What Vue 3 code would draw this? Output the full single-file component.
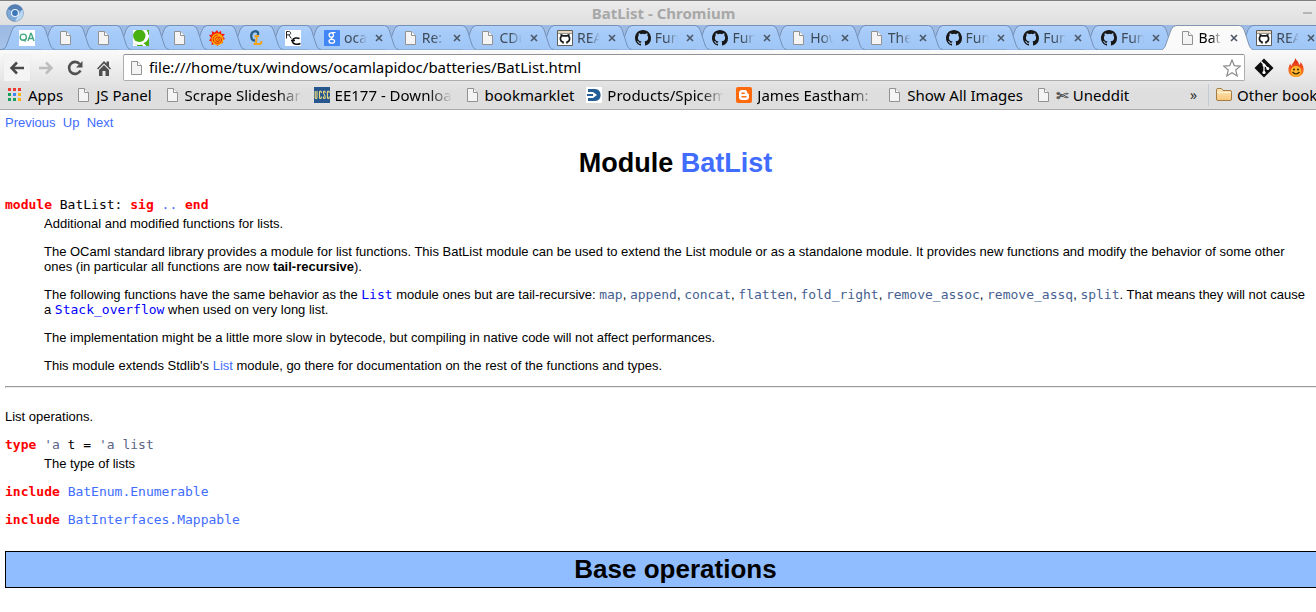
<script setup>
const pinned = ['qa', 'page', 'page', 'bubble', 'page', 'sun', 'cl', 'rc']
const tabs = [
  { icon: 'google', title: 'ocaml' },
  { icon: 'page', title: 'Re: ' },
  { icon: 'page', title: 'CDuce' },
  { icon: 'readme', title: 'README' },
  { icon: 'github', title: 'Functors' },
  { icon: 'github', title: 'Functors' },
  { icon: 'page', title: 'How' },
  { icon: 'page', title: 'The' },
  { icon: 'github', title: 'Functors' },
  { icon: 'github', title: 'Functors' },
  { icon: 'github', title: 'Functors' },
  { icon: 'page', title: 'BatList', active: true },
  { icon: 'readme', title: 'README' },
]
const allTabs = [
  ...pinned.map((icon) => ({ icon, title: '', pinned: true })),
  ...tabs,
]
const bookmarks = [
  { icon: 'apps', title: 'Apps' },
  { icon: 'page', title: 'JS Panel' },
  { icon: 'page', title: 'Scrape Slideshare', long: true },
  { icon: 'ucsc', title: 'EE177 - Downloads', long: true },
  { icon: 'page', title: 'bookmarklet' },
  { icon: 'spice', title: 'Products/Spicemas', long: true },
  { icon: 'blogger', title: 'James Eastham: Pro', long: true },
  { icon: 'page', title: 'Show All Images' },
  { icon: 'page', title: '✄ Uneddit' },
]
const functions = ['map', 'append', 'concat', 'flatten', 'fold_right', 'remove_assoc', 'remove_assq', 'split']
</script>

<template>
  <div class="window">
    <svg class="sprites" aria-hidden="true">
      <defs>
        <linearGradient id="tabfill" x1="0" y1="0" x2="0" y2="1">
          <stop offset="0" stop-color="#b2d2fb" /><stop offset=".3" stop-color="#a6cbf9" /><stop offset="1" stop-color="#9fc6f6" />
        </linearGradient>
        <linearGradient id="folder" x1="0" y1="0" x2="0" y2="1">
          <stop offset="0" stop-color="#ffe9b8" /><stop offset="1" stop-color="#f7c67c" />
        </linearGradient>
        <linearGradient id="flame" x1="0" y1="0" x2="0" y2="1">
          <stop offset="0" stop-color="#d9230f" /><stop offset=".5" stop-color="#f4511e" /><stop offset="1" stop-color="#ff9a1a" />
        </linearGradient>
      </defs>
      <symbol id="page" viewBox="0 0 16 16">
        <path d="M3.500 1.500h6l4 4v9h-10z" fill="#f4f4f4" stroke="#929292" />
        <path d="M9.500 1.500v4h4" fill="#fff" stroke="#929292" />
      </symbol>
      <symbol id="qa" viewBox="0 0 16 16">
        <path d="M0 0h16v16H0z" fill="#fff" />
        <circle cx="4.300" cy="7.200" r="3.100" fill="none" stroke="#43a883" stroke-width="1.400" />
        <path d="M4.500 9.500l2.200 2M9 11l2.700-7.500h.6L15 11M10 8.500h4" fill="none" stroke="#43a883" stroke-width="1.400" />
      </symbol>
      <symbol id="bubble" viewBox="0 0 16 16">
        <path d="M0 0h16v16H0z" fill="#fff" />
        <circle cx="6.300" cy="5.800" r="6.200" fill="#48b010" />
        <path d="M13.500 0H16v5l-.7-.2Q15.200 2 13.500 0zM16 7v9h-2.500L10.500 13Q14.500 12 16 7zM0 13Q3 16 9 14.500L10 16H0z" fill="#48b010" />
        <path d="M0 13Q2 14.500 4 14.700V16H0z" fill="#fff" />
      </symbol>
      <symbol id="sun" viewBox="0 0 16 16">
        <path d="M8 0l1.500 2.500L12 .8l.3 3L16 4l-2 2.600 2 2.400-2.600 1.300.6 3-3-.2L8.500 16 6 13.800 2.500 15l.3-3.200L0 10.500l2-2.700L0 5l3-.6L2.800 1l3 1.500z" fill="#f41c0a" />
        <circle cx="8.400" cy="9.300" r="6" fill="#ffa800" />
        <path d="M8.500 9.500c0-1.400 2-1 2 .4 0 2.300-4 2.200-4-.5 0-3.400 6-3.200 6 .5 0 4.500-7.700 4.600-8.300 0C3.800 7.500 6 5 8.500 5" fill="none" stroke="#e01c0a" stroke-width="1" />
      </symbol>
      <symbol id="cl" viewBox="0 0 16 16">
        <path d="M11 5.500V2.300C10 1.500 8.500 1 7 1.500 2.800 3 3.500 10.500 8 10.500" fill="none" stroke="#275e88" stroke-width="2.300" />
        <path d="M7.500 6h4.500M9.800 6l-1 8M6.500 14h6q2 0 2-3" fill="none" stroke="#f2a31b" stroke-width="2" />
      </symbol>
      <symbol id="rc" viewBox="0 0 16 16">
        <path d="M0 0h16v16H0z" fill="#fff" />
        <path d="M1.500 8.500v-7h2.300c2.500 0 2.500 3.300 0 3.300H1.500M3.800 4.800l2.500 3.700" fill="none" stroke="#222" />
        <path d="M14.500 8.500C12.500 7.500 8 7.500 7.500 10.500 7 14.500 12 15 15.500 13.500M6 10.500h4" fill="none" stroke="#111" stroke-width="1.500" />
      </symbol>
      <symbol id="google" viewBox="0 0 16 16">
        <rect width="16" height="16" rx="1" fill="#4285f4" />
        <circle cx="7.300" cy="5" r="2.200" fill="none" stroke="#fff" stroke-width="1.300" />
        <path d="M7.500 2.500h4M9 7c-3 .7-2 1.700-.5 2.200" fill="none" stroke="#fff" stroke-width="1.200" />
        <ellipse cx="7.800" cy="11.300" rx="2.800" ry="1.900" fill="none" stroke="#fff" stroke-width="1.300" />
      </symbol>
      <symbol id="github" viewBox="0 0 16 16">
        <path d="M8 0C3.580 0 0 3.580 0 8c0 3.540 2.290 6.530 5.470 7.590.4.070.55-.17.55-.38 0-.19-.01-.82-.01-1.490-2.010.37-2.530-.49-2.690-.94-.09-.23-.48-.94-.82-1.130-.28-.15-.68-.52-.01-.53.63-.01 1.080.58 1.230.82.72 1.210 1.870.87 2.330.66.07-.52.28-.87.51-1.070-1.780-.2-3.640-.89-3.640-3.950 0-.87.31-1.590.82-2.150-.08-.2-.36-1.020.08-2.120 0 0 .67-.21 2.200.82a7.600 7.600 0 0 1 4 0c1.530-1.040 2.200-.82 2.200-.82.44 1.100.16 1.920.08 2.120.51.56.82 1.270.82 2.150 0 3.070-1.870 3.750-3.650 3.950.29.25.54.73.54 1.480 0 1.070-.01 1.930-.01 2.200 0 .21.15.46.55.38A8 8 0 0 0 16 8c0-4.420-3.580-8-8-8z" fill="#171717" />
      </symbol>
      <symbol id="readme" viewBox="0 0 16 16">
        <path d="M.5.500h15v15H.5z" fill="#fff" stroke="#5d5d5d" />
        <path d="M1 1h14v2H1z" fill="#e8d8c0" /><path d="M1 3.500h14" stroke="#999" />
        <path d="M6 13.500v-1.300C3 11.500 2.800 7.500 4.300 6.500V5l2 .8h3.400l2-.8v1.500c1.500 1 1.300 5-1.700 5.700v1.300" fill="none" stroke="#171717" stroke-width="1.700" />
      </symbol>
      <symbol id="apps" viewBox="0 0 16 16">
        <path d="M1 1h3v3H1zM6 1h3v3H6zM11 1h3v3h-3z" fill="#ee3b30" />
        <path d="M1 6h3v3H1z" fill="#16a05d" /><path d="M6 6h3v3H6z" fill="#3b87f5" /><path d="M11 6h3v3h-3z" fill="#f9b613" />
        <path d="M1 11h3v3H1zM6 11h3v3H6z" fill="#16a05d" /><path d="M11 11h3v3h-3z" fill="#f9b613" />
      </symbol>
      <symbol id="ucsc" viewBox="0 0 16 16">
        <path d="M0 0h16v16H0z" fill="#27568f" />
        <path d="M1.200 4v6.500q0 1 .9 1t.9-1V4M7.300 6V5q0-1-.9-1t-.9 1v5.500q0 1 .9 1t.9-1v-1M11.200 6V5q0-1-.9-1t-.9 1c0 3 1.800 2 1.800 5.500q0 1-.9 1t-.9-1v-1M15.200 6V5q0-1-.9-1t-.9 1v5.500q0 1 .9 1t.9-1v-1" fill="none" stroke="#f0dc7c" stroke-width="1.100" />
      </symbol>
      <symbol id="spice" viewBox="0 0 16 16">
        <path d="M0 0h16v16H0z" fill="#fff" />
        <path d="M2 2h7c7.500 0 7.500 12 0 12H2v-3h5V9H1V7h6V5H2z" fill="#235f96" />
        <path d="M7 5l4 3-4 3z" fill="#fff" />
      </symbol>
      <symbol id="blogger" viewBox="0 0 16 16">
        <rect width="16" height="16" rx="2" fill="#ff6a0c" />
        <path d="M6 3h2.500C11 3 11.300 5 11.300 6c0 1 1.700.2 1.700 1.500V10c0 2-1.300 3-3 3H6c-2 0-3-1.300-3-3V6c0-2 1.300-3 3-3z" fill="#fff" />
        <path d="M6 6.200h2.200M6 9.800h4" stroke="#ff6a0c" stroke-width="1.400" stroke-linecap="round" />
      </symbol>
    </svg>

    <header class="titlebar">
      <svg class="chromium" viewBox="0 0 18 18" aria-hidden="true">
        <circle cx="9" cy="9" r="8.300" fill="#7fa9d8" stroke="#587da8" stroke-width=".8" />
        <path d="M9 9L1.800 5A8.300 8.300 0 0 1 16.500 5.500z" fill="#537fb4" />
        <path d="M9 17.300l3.500-6.500L16.500 5.500A8.300 8.300 0 0 1 9 17.300z" fill="#b9d6f2" />
        <circle cx="9" cy="9" r="4" fill="#eef5fc" /><circle cx="9" cy="9" r="2.900" fill="#3e76ba" />
      </svg>
      <span class="caption">BatList - Chromium</span>
      <button class="minimize" aria-label="Minimize"></button>
    </header>

    <nav class="tabstrip" aria-label="Tabs">
      <div
        v-for="(tab, i) in allTabs"
        :key="i"
        class="tab"
        :class="{ pinned: tab.pinned, active: tab.active }"
        :style="{ zIndex: tab.active ? 40 : 30 - i }"
      >
        <svg v-if="tab.pinned" class="shape" viewBox="0 0 53 25" preserveAspectRatio="none" aria-hidden="true">
          <path d="M0 24.500C3 24 4 22 5 19L10 5Q11.500 1 15 .5H39Q42 1 43.500 5L48 19C49 22 50 24 53 24.500" />
        </svg>
        <svg v-else class="shape" viewBox="0 0 93 25" preserveAspectRatio="none" aria-hidden="true">
          <path v-if="tab.active" d="M0 25C3 24 4 22 5 19L10 5Q11.500 1 15 .5H79Q82 1 83.500 5L88 19C89 22 90 24 93 25" />
          <path v-else d="M0 24.500C3 24 4 22 5 19L10 5Q11.500 1 15 .5H79Q82 1 83.500 5L88 19C89 22 90 24 93 24.500" />
        </svg>
        <svg class="icon" aria-hidden="true"><use :href="'#' + tab.icon" /></svg>
        <template v-if="!tab.pinned">
          <span class="tab-title">{{ tab.title }}</span>
          <button class="close" aria-label="Close tab">
            <svg viewBox="0 0 8 8" aria-hidden="true"><path d="M1 1l6 6M7 1L1 7" /></svg>
          </button>
        </template>
      </div>
    </nav>

    <div class="chrome">
      <div class="toolbar">
        <button class="tool framed" aria-label="Back">
          <svg viewBox="0 0 16 16"><path d="M15 8H3M8 2.500L2.500 8 8 13.500" fill="none" stroke="#4a4a4a" stroke-width="2.500" /></svg>
        </button>
        <button class="tool" aria-label="Forward">
          <svg viewBox="0 0 16 16"><path d="M1 8h12M8 2.500L13.500 8 8 13.500" fill="none" stroke="#bdbdbd" stroke-width="2.500" /></svg>
        </button>
        <button class="tool" aria-label="Reload">
          <svg viewBox="0 0 16 16"><path d="M12.700 4A6 6 0 1 0 13.500 10.500" fill="none" stroke="#505050" stroke-width="2.600" /><path d="M15.500 1v6.500H9z" fill="#505050" /></svg>
        </button>
        <button class="tool" aria-label="Home">
          <svg viewBox="0 0 16 16"><path d="M8 1L1 8.500l1 1L8 3.500l6 6 1-1-2-2V1.500h-2.500v2z" fill="#505050" /><path d="M8 5l5 5v6H9.500v-5h-3v5H3v-6z" fill="#505050" /></svg>
        </button>
        <label class="address">
          <svg class="icon" aria-hidden="true"><use href="#page" /></svg>
          <input type="text" aria-label="Address" value="file:///home/tux/windows/ocamlapidoc/batteries/BatList.html" />
          <svg class="star" viewBox="0 0 18 18" aria-hidden="true"><path d="M9 1l2.300 5.600 6 .5-4.600 3.900 1.500 5.900L9 13.700l-5.200 3.200 1.500-5.900L.7 7.100l6-.5z" /></svg>
        </label>
        <button class="extension" aria-label="Git">
          <svg viewBox="0 0 20 20"><path d="M10 .5l9.500 9.500-9.500 9.500L.5 10z" fill="#0c0c0c" /><path d="M7 3.500l3 3V15M10.500 7l3.500 3.500" fill="none" stroke="#fff" stroke-width="1.300" /><circle cx="10" cy="14.500" r="1.600" fill="#fff" /><circle cx="10" cy="7" r="1.500" fill="#fff" /><circle cx="13.800" cy="10.500" r="1.500" fill="#fff" /></svg>
        </button>
        <button class="extension" aria-label="Flame">
          <svg viewBox="0 0 20 20"><path d="M9 0c1 2 4 3.500 4 7 1-.5 1.500-1.500 1.500-3C17 7 18 9.500 17.500 13c-.5 4-4 6-7.500 6s-7-2-7.500-6C2.200 10 3 7.500 4.500 5.500c0 1.500.3 2 1 2.500C6 5 9.500 3.500 9 0z" fill="url(#flame)" /><circle cx="10" cy="13" r="5.200" fill="#ffb52c" /><circle cx="8" cy="11.500" r="1" fill="#402000" /><circle cx="12" cy="11.500" r="1" fill="#402000" /><path d="M6.500 14q3.500 4 7 0" fill="none" stroke="#402000" stroke-width="1.200" /></svg>
        </button>
      </div>

      <nav class="bookmarks" aria-label="Bookmarks">
        <a v-for="mark in bookmarks" :key="mark.title" href="#" class="bookmark">
          <svg class="icon" aria-hidden="true"><use :href="'#' + mark.icon" /></svg>
          <span class="label" :class="{ long: mark.long }">{{ mark.title }}</span>
        </a>
        <div class="overflow">
          <button class="more" aria-label="More bookmarks">»</button>
          <a href="#" class="bookmark other">
            <svg class="icon" viewBox="0 0 16 16" aria-hidden="true"><path d="M.5 12V3q0-1.500 1.500-1.500h3.500L7 3.500h7q1.500 0 1.500 1.500v7q0 1.500-1.500 1.500H2Q.5 13.500.5 12z" fill="url(#folder)" stroke="#a67c45" /><path d="M1 5.500h14" stroke="#fff3d6" /></svg>
            <span class="label">Other bookmarks</span>
          </a>
        </div>
      </nav>
    </div>

    <main class="document">
      <nav class="pager"><a href="#">Previous</a>&nbsp; <a href="#">Up</a>&nbsp; <a href="#">Next</a></nav>
      <h1>Module <a href="#">BatList</a></h1>
      <div class="signature"><b>module</b> BatList: <b>sig</b> <a href="#">..</a> <b>end</b></div>
      <section class="info">
        <p>Additional and modified functions for lists.</p>
        <p>The OCaml standard library provides a module for list functions. This BatList module can be used to extend the List module or as a standalone module. It provides new functions and modify the behavior of some other ones (in particular all functions are now <strong>tail-recursive</strong>).</p>
        <p>The following functions have the same behavior as the <code class="constructor">List</code> module ones but are tail-recursive: <template v-for="(name, i) in functions" :key="name"><code>{{ name }}</code>{{ i < functions.length - 1 ? ', ' : '. ' }}</template>That means they will not cause a <code class="constructor">Stack_overflow</code> when used on very long list.</p>
        <p>The implementation might be a little more slow in bytecode, but compiling in native code will not affect performances.</p>
        <p>This module extends Stdlib's <a href="#">List</a> module, go there for documentation on the rest of the functions and types.</p>
      </section>
      <hr />
      <p class="intro">List operations.</p>
      <div class="signature"><b>type</b> <i>'a</i> t = <i>'a list</i></div>
      <section class="info"><p>The type of lists</p></section>
      <div class="signature include"><b>include</b> <a href="#">BatEnum.Enumerable</a></div>
      <div class="signature include"><b>include</b> <a href="#">BatInterfaces.Mappable</a></div>
      <h2>Base operations</h2>
    </main>
  </div>
</template>

<style>
html, body { background: #fff; }
</style>

<style scoped>
.window { overflow: hidden; font-family: "Noto Sans", "Open Sans", sans-serif; color: #000; }
.sprites { position: absolute; width: 0; height: 0; }
button { border: 0; padding: 0; margin: 0; background: none; font: inherit; }
svg { display: block; flex: none; }
.icon { width: 16px; height: 16px; }
.titlebar { display: flex; align-items: center; height: 25px; box-sizing: border-box; border-top: 1px solid #7f7f7f; background: linear-gradient(#ebebeb, #dfdfdf); padding: 0 4px 0 6px; }
.chromium { width: 18px; height: 18px; }
.caption { flex: 1; text-align: center; font-size: 15px; line-height: 20px; font-weight: 700; color: #a8a8a8; }
.minimize { width: 9px; height: 2px; background: #b5b5b5; }
.tabstrip { display: flex; height: 25px; padding-left: 2px; background: linear-gradient(#9bb9e2, #a5c3ea); box-shadow: inset 0 -1px #7791b3; isolation: isolate; }
.tab { position: relative; flex: 1 1 0; min-width: 0; display: flex; align-items: center; box-sizing: border-box; height: 25px; padding-left: 18px; }
.tab.pinned { flex: 0 0 38px; padding-left: 17px; }
.shape { position: absolute; left: 0; top: 0; width: calc(100% + 15px); height: 25px; fill: url(#tabfill); stroke: #7390b8; stroke-width: 1; }
.active .shape { fill: #fafafa; stroke: #8195b0; }
.tab .icon { position: relative; }
.tab-title { position: relative; width: 23px; margin-left: 4px; overflow: hidden; white-space: nowrap; font-size: 14px; line-height: 20px; color: #3f4a58; mask-image: linear-gradient(90deg, #000 50%, transparent); }
.active .tab-title { color: #000; }
.close { position: relative; flex: none; margin-left: 8px; }
.close svg { width: 8px; height: 8px; stroke: #4b5766; stroke-width: 1.6; }
.chrome { background: linear-gradient(#fafafa, #dedede 70%); border-bottom: 1px solid #a9a9a9; }
.toolbar { display: flex; align-items: center; height: 33px; padding: 2px 10px 0 4px; box-sizing: border-box; }
.tool { display: flex; align-items: center; justify-content: center; width: 26px; height: 26px; margin-right: 3px; }
.tool.framed { background: #f4f4f4; box-shadow: 0 0 1px #ddd; }
.tool svg { width: 16px; height: 16px; }
.address { flex: 1; display: flex; align-items: center; height: 27px; box-sizing: border-box; margin-left: 3px; margin-right: 9px; padding: 0 3px 0 4px; border: 1px solid #adadad; border-top-color: #929292; border-radius: 2px; background: #fff; }
.address input { flex: 1; min-width: 0; height: 21px; border: 0; outline: 0; padding: 0 0 1px; box-sizing: border-box; margin-left: 5px; background: none; font: 15px/20px "Noto Sans", "Open Sans", sans-serif; color: #000; }
.star { width: 18px; height: 18px; fill: #fff; stroke: #8b8b8b; stroke-width: 1.2; }
.extension { margin-right: 12px; }
.extension:last-child { margin-right: 0; }
.extension svg { width: 20px; height: 20px; }
.bookmarks { display: flex; align-items: center; gap: 12px; height: 26px; box-sizing: border-box; padding: 0 0 2px 7px; }
.bookmark { display: flex; align-items: center; gap: 5px; flex: none; color: #000; text-decoration: none; }
.label { font-size: 15px; line-height: 22px; white-space: nowrap; }
.label.long { width: 117px; overflow: hidden; mask-image: linear-gradient(90deg, #000 80%, transparent); }
.overflow { display: flex; align-items: center; margin-left: auto; width: 126px; flex: none; }
.more { flex: none; width: 18px; font-size: 14px; line-height: 20px; text-align: left; color: #333; }
.other { border-left: 1px solid #c3ccd6; padding-left: 7px; }
.document { width: calc(100% + 35px); box-sizing: border-box; padding: 5px 5px 24px; font: 13px/15px "Liberation Sans", Arial, sans-serif; }
.document a { color: #416dff; text-decoration: none; }
.document p { margin: 0; }
h1 { margin: 18px 0 19px; font-size: 27px; line-height: 30px; text-align: center; }
.signature, code { font-family: "DejaVu Sans Mono", monospace; }
code { font-size: 13px; line-height: 1; color: #465f91; }
code.constructor { color: #00f; }
.signature b { color: #f00; }
.signature i { font-style: normal; color: #5c6585; }
.info { margin: 4px 39px 13px; }
.document .info p + p { margin-top: 13px; }
hr { margin: 0; border: 1px inset #eee; }
.document .intro { margin: 21px 0 13px; }
.include { margin-bottom: 13px; }
h2 { margin: 24px 0 0; padding: 2px; border: 1px solid #000; background: #90bdff; font-size: 26px; line-height: 31px; text-align: center; }
</style>
